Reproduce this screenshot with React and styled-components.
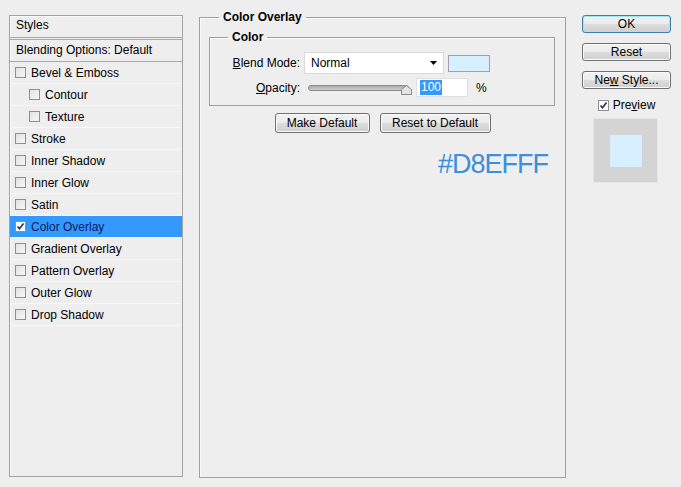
import React from "react";
import styled, { createGlobalStyle } from "styled-components";

const GlobalStyle = createGlobalStyle`
  html, body {
    margin: 0;
    padding: 0;
    background: #eeeeee;
  }
  body {
    font-family: "Liberation Sans", Arial, sans-serif;
    font-size: 12px;
    color: #000;
  }
`;

const styleRows = [
  { label: "Bevel & Emboss" },
  { label: "Contour", indent: true },
  { label: "Texture", indent: true },
  { label: "Stroke" },
  { label: "Inner Shadow" },
  { label: "Inner Glow" },
  { label: "Satin" },
  { label: "Color Overlay", checked: true, selected: true },
  { label: "Gradient Overlay" },
  { label: "Pattern Overlay" },
  { label: "Outer Glow" },
  { label: "Drop Shadow" },
];

function Check({ checked }) {
  return (
    <CheckBox $checked={checked}>
      {checked && (
        <svg width="9" height="9" viewBox="0 0 9 9">
          <path d="M1.5 4.5 L3.5 6.8 L7.5 1.5" stroke="#1f2d5c" strokeWidth="1.6" fill="none" />
        </svg>
      )}
    </CheckBox>
  );
}

export default function App() {
  return (
    <>
      <GlobalStyle />
      <Dialog>
        <StylesPanel>
          <PanelHeader>Styles</PanelHeader>
          <BlendHeader>Blending Options: Default</BlendHeader>
          {styleRows.map((r) => (
            <StyleRow key={r.label} $indent={r.indent} $selected={r.selected}>
              <Check checked={r.checked} />
              <span>{r.label}</span>
            </StyleRow>
          ))}
        </StylesPanel>

        <MainPanel>
          <Legend>Color Overlay</Legend>
          <ColorGroup>
            <Legend>Color</Legend>
            <FormGrid>
              <Label>
                <u>B</u>lend Mode:
              </Label>
              <Inline>
                <Select>
                  <span>Normal</span>
                  <svg width="7" height="4" viewBox="0 0 7 4">
                    <path d="M0 0 H7 L3.5 4 Z" fill="#000" />
                  </svg>
                </Select>
                <Swatch />
              </Inline>
              <Label>
                <u>O</u>pacity:
              </Label>
              <Inline>
                <Slider>
                  <Track />
                  <svg width="11" height="10" viewBox="0 0 11 10">
                    <path
                      d="M0.5 9.5 V4.5 L5.5 0.5 L10.5 4.5 V9.5 Z"
                      fill="#e4e4e4"
                      stroke="#8a8a8a"
                    />
                  </svg>
                </Slider>
                <NumberBox>
                  <Selected>100</Selected>
                </NumberBox>
                <Unit>%</Unit>
              </Inline>
            </FormGrid>
          </ColorGroup>
          <ButtonRow>
            <Button $w={95}>Make Default</Button>
            <Button $w={111}>Reset to Default</Button>
          </ButtonRow>
          <HexNote>#D8EFFF</HexNote>
        </MainPanel>

        <SideColumn>
          <Button $w={89} $focus>
            OK
          </Button>
          <Button $w={89}>Reset</Button>
          <Button $w={89}>
            <span>
              Ne<u>w</u> Style...
            </span>
          </Button>
          <PreviewToggle>
            <Check checked />
            <span>
              Pre<u>v</u>iew
            </span>
          </PreviewToggle>
          <PreviewBox>
            <PreviewSquare />
          </PreviewBox>
        </SideColumn>
      </Dialog>
    </>
  );
}

const Dialog = styled.div`
  display: flex;
  align-items: flex-start;
  padding: 15px 0 0 9px;
  width: 681px;
  height: 487px;
  box-sizing: border-box;
`;

const StylesPanel = styled.div`
  width: 174px;
  height: 462px;
  box-sizing: border-box;
  border: 1px solid #a2a2a2;
  box-shadow: inset 1px 1px 0 #fafafa;
  background: #eeeeee;
`;

const PanelHeader = styled.div`
  height: 21px;
  line-height: 19px;
  padding-left: 6px;
  border-bottom: 3px double #a8a8a8;
`;

const BlendHeader = styled(PanelHeader)`
  height: 21px;
  line-height: 20px;
  border-bottom: 1px solid #a8a8a8;
`;

const StyleRow = styled.div`
  display: flex;
  align-items: center;
  gap: 5px;
  height: 22px;
  box-sizing: border-box;
  padding-left: ${(p) => (p.$indent ? 19 : 5)}px;
  border-bottom: 1px solid #f7f7f7;
  background: ${(p) => (p.$selected ? "#3399ff" : "transparent")};
  color: ${(p) => (p.$selected ? "#0d1a5a" : "#000")};
`;

const CheckBox = styled.span`
  width: 11px;
  height: 11px;
  box-sizing: border-box;
  border: 1px solid #8f8f8f;
  background: ${(p) =>
    p.$checked ? "#ffffff" : "linear-gradient(135deg, #e2e2e2, #f7f7f7)"};
  display: inline-flex;
  align-items: center;
  justify-content: center;
  flex-shrink: 0;
`;

const MainPanel = styled.fieldset`
  margin: -5px 0 0 16px;
  padding: 0;
  width: 367px;
  height: 468px;
  box-sizing: border-box;
  min-width: 0;
  border: 1px solid #a0a0a0;
  box-shadow: inset 1px 1px 0 #fafafa;
`;

const Legend = styled.legend`
  margin-left: 19px;
  padding: 0 4px;
  font-weight: bold;
  line-height: 14px;
`;

const ColorGroup = styled.fieldset`
  margin: 6px 0 0 9px;
  padding: 8px 0 8px 0;
  width: 346px;
  box-sizing: border-box;
  min-width: 0;
  border: 1px solid #a0a0a0;
  box-shadow: inset 1px 1px 0 #fafafa;

  legend {
    margin-left: 18px;
  }
`;

const FormGrid = styled.div`
  display: grid;
  grid-template-columns: 90px auto;
  column-gap: 4px;
  row-gap: 4px;
  align-items: center;
`;

const Label = styled.span`
  text-align: right;
  u {
    text-decoration-thickness: 1px;
  }
`;

const Inline = styled.div`
  display: flex;
  align-items: center;
  gap: 4px;
`;

const Select = styled.div`
  width: 140px;
  height: 22px;
  box-sizing: border-box;
  background: #fff;
  border: 1px solid #dadada;
  display: flex;
  align-items: center;
  justify-content: space-between;
  padding: 0 6px 0 6px;
`;

const Swatch = styled.div`
  width: 42px;
  height: 17px;
  box-sizing: border-box;
  background: #d8efff;
  border: 1px solid #9aa3aa;
`;

const Slider = styled.div`
  width: 104px;
  margin-left: 4px;
  height: 19px;
  display: flex;
  align-items: center;
  svg {
    margin-left: -8px;
    margin-top: 5px;
  }
`;

const Track = styled.div`
  flex: 1;
  height: 4px;
  border: 1px solid #8c8c8c;
  border-radius: 3px;
  background: linear-gradient(#a9a9a9, #d0d0d0);
`;

const NumberBox = styled.div`
  width: 52px;
  height: 19px;
  box-sizing: border-box;
  background: #fff;
  border: 1px solid #e0e0e0;
  display: flex;
  align-items: center;
  padding-left: 3px;
`;

const Selected = styled.span`
  background: #3399ff;
  color: #fff;
  line-height: 15px;
  padding: 0 1px;
`;

const Unit = styled.span`
  margin-left: 4px;
`;

const ButtonRow = styled.div`
  display: flex;
  justify-content: center;
  gap: 10px;
  margin-top: 7px;
`;

const Button = styled.div`
  width: ${(p) => p.$w}px;
  height: 20px;
  box-sizing: border-box;
  display: flex;
  align-items: center;
  justify-content: center;
  border: 1px solid ${(p) => (p.$focus ? "#3c7fb1" : "#707070")};
  border-radius: 3px;
  background: linear-gradient(#f2f2f2 0%, #ebebeb 50%, #dddddd 51%, #cfcfcf 100%);
  box-shadow: ${(p) =>
    p.$focus ? "inset 0 0 0 1px #9fe6f0" : "inset 0 0 0 1px #fbfbfb"};
  color: #000;
`;

const HexNote = styled.div`
  margin-top: 16px;
  padding-right: 17px;
  text-align: right;
  font-size: 27px;
  line-height: 30px;
  letter-spacing: -1px;
  color: #3b8fdb;
`;

const SideColumn = styled.div`
  margin-left: 16px;
  width: 89px;
  display: flex;
  flex-direction: column;
  align-items: center;
  gap: 10px;

  ${Button} {
    height: 18px;
  }
`;

const PreviewToggle = styled.div`
  display: flex;
  align-items: center;
  gap: 4px;
  margin-top: -1px;
`;

const PreviewBox = styled.div`
  width: 65px;
  height: 65px;
  margin-top: -4px;
  margin-left: -2px;
  box-sizing: border-box;
  background: #d4d4d4;
  border: 1px solid #e6e6e6;
  display: flex;
  align-items: center;
  justify-content: center;
`;

const PreviewSquare = styled.div`
  width: 32px;
  height: 32px;
  background: #d8efff;
`;
